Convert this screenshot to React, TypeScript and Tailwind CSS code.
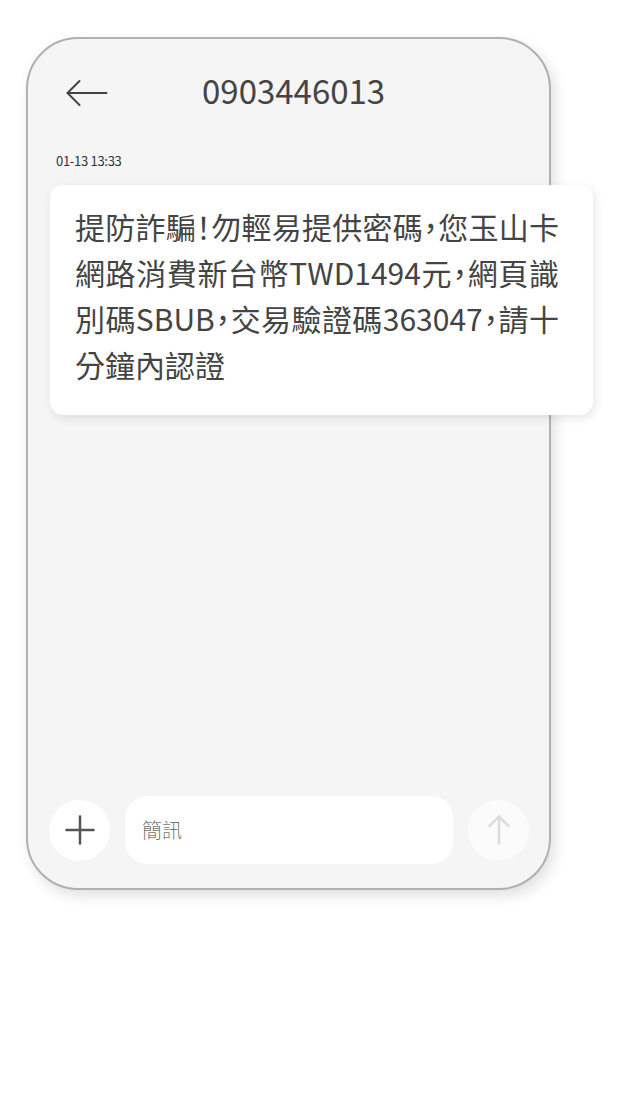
import React from "react";

export default function App() {
  const font = { fontFamily: '"Noto Sans CJK TC", "Noto Sans", sans-serif' };
  return (
    <div className="w-[620px] h-[1110px] bg-white" style={font}>
      <div className="pt-[37px] pl-[26px]">
        <div className="w-[525px] h-[853px] border-2 border-[#b0b0b0] rounded-[52px] bg-[#f5f5f5] shadow-[4px_6px_14px_rgba(0,0,0,0.12)] flex flex-col">
          {/* header */}
          <div className="mt-[23px] h-[60px] flex items-center pl-[38px]">
            <svg width="42" height="28" viewBox="0 0 42 28" fill="none" stroke="#444" strokeWidth="2" strokeLinecap="round" strokeLinejoin="round" className="mt-[2px]">
              <path d="M1.5 14H40.5" />
              <path d="M13.5 2L1.5 14L13.5 26" />
            </svg>
            <div className="ml-[94px] mb-[4px] text-[33px] leading-none text-[#444]">0903446013</div>
          </div>
          {/* timestamp */}
          <div className="mt-[30px] pl-[28px] h-[18px] text-[13px] leading-[18px] tracking-[-0.3px] text-[#333]">01-13 13:33</div>
          {/* bubble */}
          <div className="mt-[15px] ml-[22px] w-[543px] bg-white rounded-[13px] shadow-[2px_3px_10px_rgba(0,0,0,0.10)] pl-[25px] pr-[34px] pt-[18px] pb-[28px] text-[30px] leading-[46px] text-[#444] text-justify [font-feature-settings:'halt']">
            提防詐騙！勿輕易提供密碼，您玉山卡網路消費新台幣TWD1494元，網頁識別碼SBUB，交易驗證碼363047，請十分鐘內認證
          </div>
          {/* bottom bar */}
          <div className="mt-auto mb-[24px] flex items-center pl-[21px]">
            <div className="w-[61px] h-[61px] rounded-full bg-white flex items-center justify-center">
              <svg width="30" height="30" viewBox="0 0 30 30" stroke="#555" strokeWidth="2.5" strokeLinecap="round">
                <path d="M15 1.5V28.5" />
                <path d="M1.5 15H28.5" />
              </svg>
            </div>
            <div className="ml-[15px] w-[328px] h-[68px] rounded-[22px] bg-white flex items-center pl-[17px] text-[20px] font-light text-[#777]">
              簡訊
            </div>
            <div className="ml-[15px] w-[61px] h-[61px] rounded-full bg-[#fbfbfb] flex items-center justify-center">
              <svg width="24" height="30" viewBox="0 0 24 30" fill="none" stroke="#dcdcdc" strokeWidth="2.5" strokeLinecap="round" strokeLinejoin="round">
                <path d="M12 1.5V28.5" />
                <path d="M2.5 11L12 1.5L21.5 11" />
              </svg>
            </div>
          </div>
        </div>
      </div>
    </div>
  );
}
